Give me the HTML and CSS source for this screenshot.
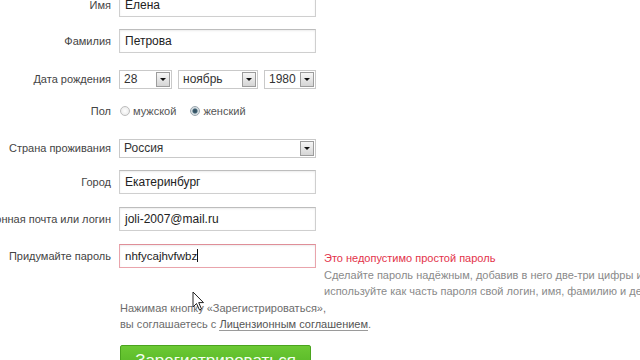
FILE: index.html
```html
<!DOCTYPE html>
<html lang="ru">
<head>
<meta charset="utf-8">
<title>Регистрация</title>
<link rel="stylesheet" href="styles.css">
</head>
<body>
<div class="page">
  <form class="form">
    <div class="row r-name">
      <div class="label"><span>Имя</span></div>
      <div class="field"><div class="input">Елена</div></div>
    </div>
    <div class="row r-surname">
      <div class="label"><span>Фамилия</span></div>
      <div class="field"><div class="input">Петрова</div></div>
    </div>
    <div class="row r-date">
      <div class="label"><span>Дата рождения</span></div>
      <div class="field dates">
        <div class="select s-day"><span class="val">28</span><span class="btn"><i></i></span></div>
        <div class="select s-month"><span class="val">ноябрь</span><span class="btn"><i></i></span></div>
        <div class="select s-year"><span class="val">1980</span><span class="btn"><i></i></span></div>
      </div>
    </div>
    <div class="row r-sex">
      <div class="label"><span>Пол</span></div>
      <div class="field radios">
        <span class="radio"></span><span class="rlabel">мужской</span>
        <span class="radio checked"></span><span class="rlabel">женский</span>
      </div>
    </div>
    <div class="row r-country">
      <div class="label"><span>Страна проживания</span></div>
      <div class="field"><div class="select s-full"><span class="val">Россия</span><span class="btn"><i></i></span></div></div>
    </div>
    <div class="row r-city">
      <div class="label"><span>Город</span></div>
      <div class="field"><div class="input">Екатеринбург</div></div>
    </div>
    <div class="row r-email">
      <div class="label"><span>Электронная почта или логин</span></div>
      <div class="field"><div class="input">joli-2007@mail.ru</div></div>
    </div>
    <div class="row r-pass">
      <div class="label"><span>Придумайте пароль</span></div>
      <div class="field"><div class="input error">nhfycajhvfwbz<span class="caret"></span></div></div>
      <div class="hint">
        <div class="err">Это недопустимо простой пароль</div>
        <div class="tip">Сделайте пароль надёжным, добавив в него две-три цифры и заглавные буквы. Не</div>
        <div class="tip">используйте как часть пароля свой логин, имя, фамилию и дедушкин год рождения.</div>
      </div>
    </div>
    <div class="agree">
      <p>Нажимая кнопку «Зарегистрироваться»,</p>
      <p>вы соглашаетесь с <a href="#">Лицензионным соглашением</a>.</p>
    </div>
    <div class="submit"><button type="button" class="button">Зарегистрироваться</button></div>
  </form>
  <svg class="pointer" width="14" height="20" viewBox="0 0 14 20"><path d="M1 1 L1 16 L4.5 12.5 L7.5 19 L9.5 18 L6.7 11.6 L11.5 11.6 Z" fill="#fff" stroke="#222" stroke-width="1" stroke-linejoin="round"/></svg>
</div>
</body>
</html>
```
FILE: styles.css
```css
html, body {
  margin: 0;
  padding: 0;
  background: #ffffff;
  overflow: hidden;
}
body {
  width: 640px;
  height: 360px;
  font-family: "Liberation Sans", Arial, sans-serif;
  color: #333;
}
.page {
  position: relative;
  width: 640px;
  height: 360px;
  overflow: hidden;
}
.form {
  display: flex;
  flex-direction: column;
  margin-top: -7px;
}
.row {
  display: flex;
  align-items: center;
  height: 24px;
}
.r-surname { margin-top: 12px; }
.r-date { margin-top: 14px; }
.r-sex { margin-top: 8px; }
.r-country { margin-top: 13px; }
.r-city { margin-top: 10px; }
.r-email { margin-top: 13px; }
.r-pass { margin-top: 13px; align-items: flex-start; }
.label {
  width: 111px;
  flex: none;
  display: flex;
  justify-content: flex-end;
  font-size: 11px;
  color: #444;
  white-space: nowrap;
}
.r-pass .label { line-height: 24px; }
.field {
  margin-left: 8px;
  width: 197px;
  flex: none;
}
.input {
  box-sizing: border-box;
  height: 24px;
  border: 1px solid #cfcfcf;
  border-top-color: #bdbdbd;
  box-shadow: inset 0 1px 2px rgba(0,0,0,0.08);
  padding: 0 5px;
  font-size: 12px;
  line-height: 22px;
  color: #222;
  background: #fff;
  white-space: nowrap;
}
.input.error {
  border-color: #e9a4ac;
  border-top-color: #df8e98;
  font-size: 11.5px;
}
.caret {
  display: inline-block;
  width: 1px;
  height: 13px;
  background: #111;
  vertical-align: -2px;
}
.dates {
  display: flex;
  gap: 6px;
}
.select {
  box-sizing: border-box;
  height: 19px;
  border: 1px solid #c9c9c9;
  display: flex;
  align-items: center;
  justify-content: space-between;
  background: #fff;
  font-size: 12px;
  color: #333;
  padding-left: 4px;
  padding-right: 1px;
}
.s-day { width: 53px; }
.s-month { width: 80px; }
.s-year { width: 52px; }
.s-full { width: 197px; }
.btn {
  box-sizing: border-box;
  width: 14px;
  height: 15px;
  border: 1px solid #9c9c9c;
  background: linear-gradient(#f6f6f6, #d5d5d5);
  display: flex;
  align-items: center;
  justify-content: center;
}
.btn i {
  width: 0;
  height: 0;
  border-left: 3px solid transparent;
  border-right: 3px solid transparent;
  border-top: 3px solid #111;
}
.radios {
  display: flex;
  align-items: center;
  font-size: 11px;
  color: #555;
}
.radio {
  box-sizing: border-box;
  width: 10px;
  height: 10px;
  border-radius: 50%;
  border: 1px solid #bdbdbd;
  background: radial-gradient(#ffffff, #e4e4e4);
  margin-left: 1px;
  margin-right: 3px;
}
.radio.checked {
  margin-left: 14px;
  border-color: #9aa6ae;
  background: radial-gradient(circle, #2f4858 0, #3d6072 2px, #cfd8dd 3px, #eef1f3 5px);
}
.hint {
  margin-left: 8px;
  padding-top: 6px;
  font-size: 11px;
  line-height: 16.5px;
  white-space: nowrap;
}
.err { color: #e3334a; }
.tip { color: #8a8a8a; }
.agree {
  margin-top: 32px;
  margin-left: 120px;
  font-size: 11px;
  line-height: 16px;
  color: #6c6c6c;
}
.agree p { margin: 0; }
.agree a {
  color: #555;
  text-decoration: none;
  border-bottom: 1px solid #9a9a9a;
}
.submit {
  margin-top: 13px;
  margin-left: 120px;
}
.button {
  width: 191px;
  height: 32px;
  border: 1px solid #4aa41e;
  border-radius: 2px;
  background: linear-gradient(#6cc934, #4fb021);
  color: #f4fff0;
  font-family: "Liberation Sans", Arial, sans-serif;
  font-size: 17px;
  padding: 0;
  display: flex;
  align-items: flex-start;
  justify-content: center;
  padding-top: 5px;
}
.pointer {
  position: absolute;
  left: 192px;
  top: 291px;
}
```
